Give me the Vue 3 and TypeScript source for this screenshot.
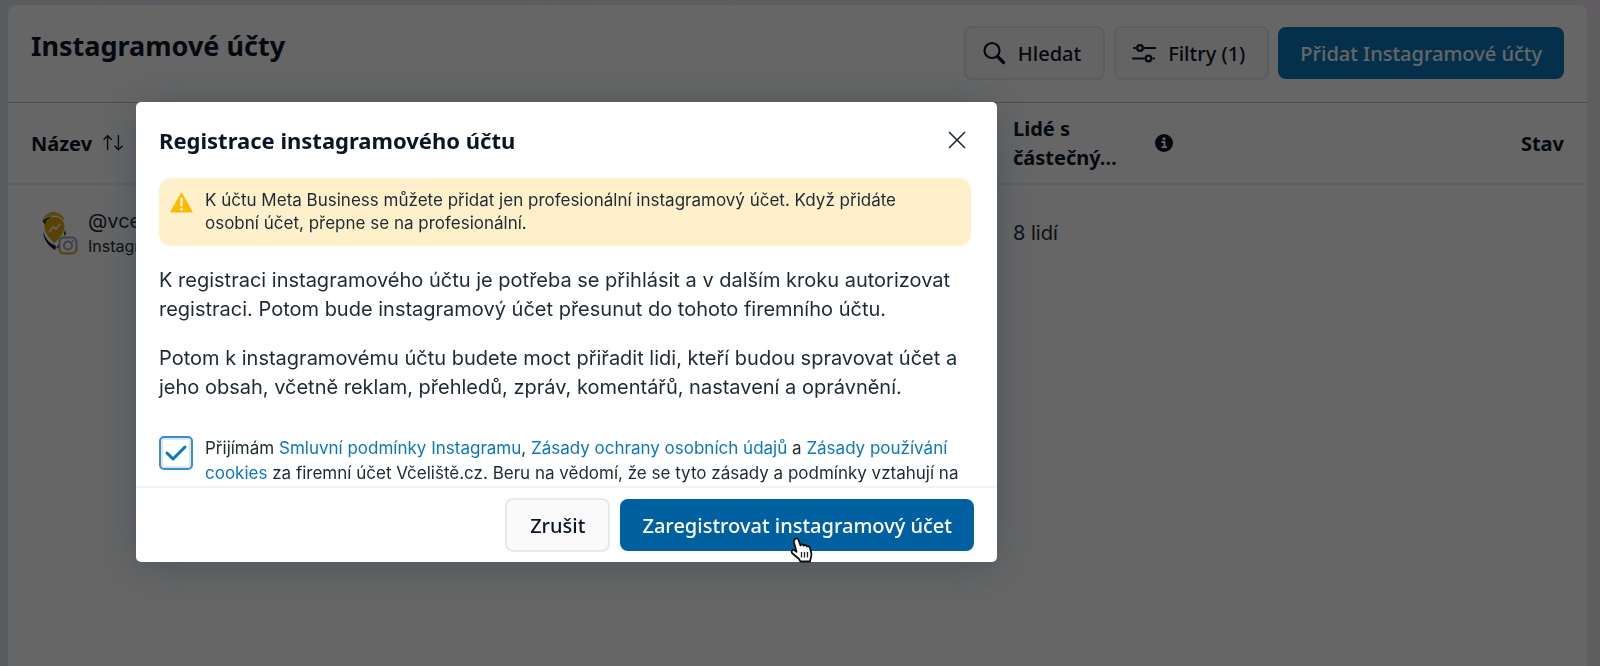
<script setup lang="ts">
import { ref } from 'vue'

const accepted = ref(true)
</script>

<template>
  <div class="page">
    <main class="panel">
      <header class="toolbar">
        <h1>Instagramové účty</h1>
        <div class="actions">
          <button type="button" class="btn">
            <svg class="icon" viewBox="0 0 24 24" aria-hidden="true">
              <circle cx="10" cy="9.500" r="7.500" />
              <path d="M15.500 15.500 21.500 21.500" stroke-width="3.200" />
            </svg>
            Hledat
          </button>
          <button type="button" class="btn">
            <svg class="icon" viewBox="0 0 24 24" aria-hidden="true">
              <path d="M2 7h1M12 7h11M1 17.500h11M21.500 17.500h.500" />
              <circle cx="8" cy="7" r="2.800" />
              <circle cx="16.500" cy="17.500" r="2.800" />
            </svg>
            Filtry (1)
          </button>
          <button type="button" class="btn primary">Přidat Instagramové účty</button>
        </div>
      </header>

      <table class="accounts">
        <thead>
          <tr>
            <th class="col-name" scope="col">
              <span class="sort">
                Název
                <svg viewBox="0 0 24 20" aria-hidden="true">
                  <path d="M6 18V2M1.500 6.500 6 2l4.500 4.500M18 1v16.500M13.500 13 18 17.500l4.500-4.500" />
                </svg>
              </span>
            </th>
            <th class="col-people" scope="col">
              <span class="people">
                <span class="people-label">Lidé s částečný…</span>
                <svg viewBox="0 0 18 18" aria-hidden="true">
                  <circle cx="9" cy="9" r="9" fill="#0a1626" />
                  <circle cx="9" cy="4.800" r="1.500" fill="#fff" />
                  <path d="M6.500 8H9.500V13M6.500 13.200H12" fill="none" stroke="#fff" stroke-width="1.800" />
                </svg>
              </span>
            </th>
            <th class="col-state" scope="col">Stav</th>
          </tr>
        </thead>
        <tbody>
          <tr>
            <td>
              <span class="account">
                <svg class="avatar" viewBox="0 0 38 44" aria-hidden="true">
                  <path d="M3 21C4 29 9 35 15 39L19 33 19 36 15 38C9 32 5 27 3 21Z" fill="#06102a" />
                  <path d="M4 22C5 28 9 32 16 35L15 38.500C8 34 4 29 4 22Z" fill="#06102a" />
                  <path d="M2 9C6 2 10 1 13.500 1 18 1 22 3 25 9L23 9C20 6 17 4.500 13.500 4.500 9 4.500 6 6 2 9Z" fill="#e9b50f" />
                  <path d="M2.500 10C5 7 9 5.500 12 5.200L7 9 5 14Z" fill="#22304a" />
                  <path d="M14 6C20 6 24.500 10 24.500 16 24.500 22 18 29 14.500 32 10 28 4.500 22 4.500 16 4.500 10 9 6 14 6Z" fill="#dca90b" />
                  <path d="m9 21 4-5 3 2 4-5" fill="none" stroke="#f7edca" stroke-width="1.800" />
                  <path d="m24 23 1-4 1 3-1 3z" fill="#16233b" />
                  <rect x="19.500" y="26.500" width="17" height="16" rx="4.500" fill="#fff" stroke="#97a0b4" stroke-width="2" />
                  <path d="M19.500 36v2q0 4.500 5 4.500h7q4 0 4.500-4" fill="none" stroke="#d8b455" stroke-width="2" />
                  <circle cx="28" cy="34.500" r="4" fill="none" stroke="#a8a0a8" stroke-width="2" />
                  <circle cx="33" cy="30" r="1" fill="#9d98b8" />
                </svg>
                <span>
                  <span class="handle">@vceliste</span>
                  <span class="kind">Instagram</span>
                </span>
              </span>
            </td>
            <td>8 lidí</td>
            <td></td>
          </tr>
        </tbody>
      </table>
    </main>

    <div class="backdrop">
      <section class="dialog" role="dialog" aria-modal="true" aria-labelledby="dialog-title">
        <header class="dialog-head">
          <h2 id="dialog-title">Registrace instagramového účtu</h2>
          <button type="button" class="close" aria-label="Zavřít">
            <svg viewBox="0 0 18 18" aria-hidden="true"><path d="m1 1 16 16M17 1 1 17" /></svg>
          </button>
        </header>

        <div class="dialog-body">
          <div class="notice">
            <svg viewBox="0 0 24 24" aria-hidden="true">
              <path d="M12 3 22.500 21.500H1.500Z" fill="#ffba00" stroke="#ffba00" stroke-width="2" stroke-linejoin="round" />
              <path d="M12 8v7" stroke="#fff" stroke-width="2.200" stroke-linecap="round" />
              <circle cx="12" cy="19" r="1.400" fill="#fff" />
            </svg>
            <p>
              K účtu Meta Business můžete přidat jen profesionální instagramový účet. Když přidáte
              osobní účet, přepne se na profesionální.
            </p>
          </div>
          <p class="copy">
            K registraci instagramového účtu je potřeba se přihlásit a v dalším kroku autorizovat
            registraci. Potom bude instagramový účet přesunut do tohoto firemního účtu.
          </p>
          <p class="copy">
            Potom k instagramovému účtu budete moct přiřadit lidi, kteří budou spravovat účet a
            jeho obsah, včetně reklam, přehledů, zpráv, komentářů, nastavení a oprávnění.
          </p>
          <div class="consent">
            <span class="tick">
              <input id="consent" v-model="accepted" type="checkbox" />
              <svg v-if="accepted" viewBox="0 0 34 34" aria-hidden="true"><path d="m8 17 6 6L26 11" /></svg>
            </span>
            <label for="consent">
              Přijímám <a href="#">Smluvní podmínky Instagramu</a>,
              <a href="#">Zásady ochrany osobních údajů</a> a <a href="#">Zásady používání cookies</a>
              za firemní účet Včeliště.cz. Beru na vědomí, že se tyto zásady a podmínky vztahují na
            </label>
          </div>
        </div>

        <footer class="dialog-foot">
          <button type="button" class="btn">Zrušit</button>
          <span class="confirm">
            <button type="button" class="btn primary">Zaregistrovat instagramový účet</button>
            <svg class="pointer" viewBox="0 0 24 26" aria-hidden="true">
              <path
                d="M5 2C6.500.800 8 1.500 8.500 3l2 5.500c.500-1.500 2.700-1.500 3.200.200 1-1.200 2.800-.700 3.200.800 1.200-.800 2.800 0 3.100 1.500l1.300 5c.500 2.500-.300 4-.800 6L20 24.500H10.500L9 22 2.500 16.500C1 15 1.500 13.300 3 13c1.200-.200 2.200.500 3.500 1.800L4 5.500C3.700 4 4 2.800 5 2Z"
                fill="#fff"
                stroke="#111"
                stroke-width="1.800"
                stroke-linejoin="round"
              />
              <path d="M11.500 15v5.500M14.500 15v5.500M17.500 15v5.500" stroke="#222" stroke-width="1.300" />
            </svg>
          </span>
        </footer>
      </section>
    </div>
  </div>
</template>

<style>
body {
  margin: 0;
}
</style>

<style scoped>
* {
  box-sizing: border-box;
}

.page {
  display: flex;
  min-height: 100vh;
  padding: 5px 13px 0 8px;
  background: linear-gradient(90deg, #dce5ee, #ebe9ef 50%, #efe8f1);
  color: #0a1626;
  font-family: Inter, "Liberation Sans", sans-serif;
  font-size: 20px;
  line-height: 28px;
}

h1,
h2,
p {
  margin: 0;
}

h1,
h2,
th,
.btn {
  font-family: "Noto Sans", "Open Sans", sans-serif;
}

.panel {
  flex: 1;
  border-radius: 8px 8px 0 0;
  background: #fff;
}

.toolbar {
  display: flex;
  justify-content: space-between;
  align-items: flex-start;
  padding: 21px 23px 22px;
  border-bottom: 1px solid #bcc0c6;
}

h1 {
  font-size: 27px;
  line-height: 40px;
  font-weight: 700;
}

.actions {
  display: flex;
  align-items: center;
  gap: 9px;
}

.btn {
  display: flex;
  align-items: center;
  gap: 12px;
  height: 54px;
  padding: 0 23px;
  border: 2px solid #e6e9ed;
  border-radius: 8px;
  background: #fafafb;
  color: #0a1626;
  font-size: 20px;
  font-weight: 500;
  white-space: nowrap;
}

.actions .btn {
  padding: 0 22px 0 16px;
}

.btn.primary,
.actions .btn.primary {
  height: 52px;
  padding: 0 22px;
  border: 0;
  background: #0a78be;
  color: #fff;
}

.icon {
  width: 24px;
  height: 24px;
  fill: none;
  stroke: #0a1626;
  stroke-width: 2.2;
  stroke-linecap: round;
}

.accounts {
  width: 100%;
  border-collapse: collapse;
  table-layout: fixed;
}

th,
td {
  padding: 11px 23px;
  text-align: left;
}

th {
  border-bottom: 2px solid #f0f1f3;
  font-size: 20px;
  line-height: 29px;
  font-weight: 700;
}

td {
  height: 96px;
  color: #1c2b33;
  vertical-align: middle;
}

.col-name {
  width: 62%;
}

.col-people {
  width: 16%;
}

.col-people,
td:nth-child(2) {
  padding-left: 26px;
}

.col-state {
  text-align: right;
}

.sort {
  display: flex;
  align-items: center;
  gap: 9px;
}

.sort svg {
  width: 24px;
  height: 18px;
  fill: none;
  stroke: #0a1626;
  stroke-width: 1.5;
}

.people {
  display: flex;
  align-items: center;
  gap: 22px;
}

.people-label {
  width: 120px;
}

.people svg {
  width: 18px;
  height: 18px;
}

.account {
  display: flex;
  align-items: center;
  gap: 10px;
  padding-left: 9px;
}

.avatar {
  width: 38px;
  height: 44px;
}

.handle,
.kind {
  display: block;
}

.handle {
  font-size: 20px;
  line-height: 26px;
}

.kind {
  font-size: 16px;
  line-height: 24px;
}

.backdrop {
  position: fixed;
  inset: 0;
  padding: 102px 136px;
  background: rgba(0, 0, 0, 0.6);
}

.dialog {
  display: flex;
  flex-direction: column;
  max-width: 861px;
  border-radius: 5px;
  background: #fff;
  box-shadow: 0 4px 40px rgba(30, 50, 70, 0.35);
}

.dialog-head {
  display: flex;
  align-items: center;
  justify-content: space-between;
  padding: 18px 25px 16px 23px;
}

h2 {
  font-size: 22px;
  line-height: 40px;
  font-weight: 700;
}

.close {
  display: grid;
  place-items: center;
  width: 30px;
  height: 30px;
  padding: 0;
  border: 0;
  background: none;
}

.close svg {
  width: 18px;
  height: 18px;
  fill: none;
  stroke: #1c2b33;
  stroke-width: 1.6;
}

.dialog-body {
  padding: 2px 26px 0 23px;
}

.notice {
  display: flex;
  gap: 12px;
  padding: 11px 48px 11px 11px;
  border-radius: 12px;
  background: #fff0cc;
  color: #1c2b33;
  font-size: 17px;
  line-height: 23px;
}

.notice svg {
  flex: none;
  width: 23px;
  height: 23px;
  margin-top: 2px;
}

.copy {
  margin: 20px 0;
  line-height: 29px;
  color: #1c2b33;
}

.consent {
  display: flex;
  gap: 12px;
  margin-top: 32px;
  font-size: 17px;
  line-height: 25px;
  color: #1c2b33;
}

.consent label {
  padding-top: 2px;
}

.tick {
  display: grid;
  flex: none;
  width: 34px;
  height: 34px;
  margin-top: 2px;
}

.tick > * {
  grid-area: 1 / 1;
}

.tick input {
  width: 34px;
  height: 34px;
  margin: 0;
  appearance: none;
  border: 2px solid #3a8fcb;
  border-radius: 5px;
  background: #fff;
  box-shadow: inset 0 0 0 2px #dce8f2;
}

.tick svg {
  width: 34px;
  height: 34px;
  fill: none;
  stroke: #0a78be;
  stroke-width: 3;
  stroke-linecap: round;
  stroke-linejoin: round;
  pointer-events: none;
}

a {
  color: #0a78be;
  text-decoration: none;
}

.dialog-foot {
  display: flex;
  align-items: center;
  justify-content: flex-end;
  gap: 10px;
  padding: 10px 23px;
  border-top: 2px solid #f3f4f5;
}

.confirm {
  position: relative;
}

.dialog-foot .btn.primary {
  background: #0060a0;
}

.pointer {
  position: absolute;
  left: 48%;
  top: 38px;
  width: 24px;
  height: 26px;
}
</style>
